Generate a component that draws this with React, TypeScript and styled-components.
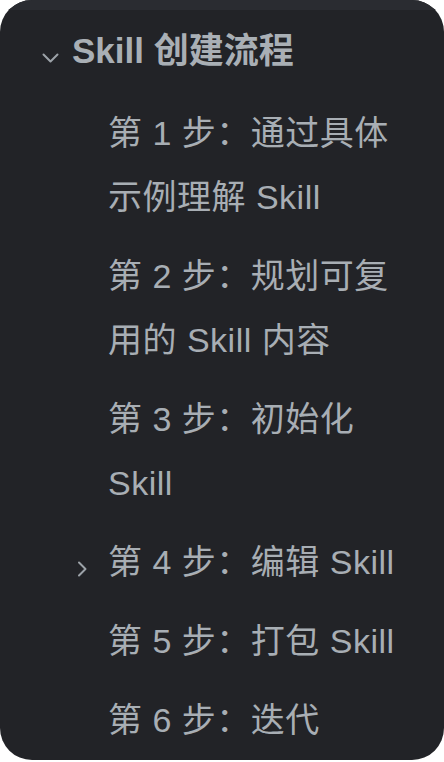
import styled, { createGlobalStyle } from "styled-components";

const GlobalStyle = createGlobalStyle`
    html, body {
        margin: 0;
        padding: 0;
        background: #ffffff;
    }

    body {
        font-family: "Liberation Sans", "Noto Sans CJK SC", sans-serif;
    }
`;

const Panel = styled.nav`
    width: 444px;
    height: 760px;
    box-sizing: border-box;
    background: #222327;
    border-radius: 32px;
    overflow: hidden;
    display: flex;
    flex-direction: column;
`;

const TopStrip = styled.div`
    height: 10px;
    flex-shrink: 0;
    background: #2a2c31;
`;

const Header = styled.div`
    display: flex;
    align-items: center;
    margin-top: 9px;
    padding-left: 42px;
    height: 64px;
`;

const IconSlot = styled.span<{ $width: number }>`
    width: ${(p) => p.$width}px;
    flex-shrink: 0;
    display: flex;
    align-items: center;
    align-self: flex-start;
    height: 64px;
    color: #9ca2a8;

    svg {
        margin-top: 14px;
        display: block;
    }
`;

const HeaderTitle = styled.span`
    font-size: 35px;
    font-weight: 700;
    line-height: 64px;
    color: #a9afb5;
    white-space: nowrap;
`;

const StepList = styled.ul`
    list-style: none;
    margin: 18px 0 0;
    padding: 0;
    display: flex;
    flex-direction: column;
    gap: 15px;
`;

const StepRow = styled.li`
    display: flex;
    padding-left: 77px;
    padding-right: 44px;
`;

const StepLabel = styled.span`
    flex: 1;
    font-size: 34px;
    line-height: 64px;
    letter-spacing: 0.5px;
    color: #a8aeb4;
`;

function ChevronDown() {
    return (
        <svg width="17" height="10" viewBox="0 0 17 10" fill="none">
            <path
                d="M1.5 1.5 L8.5 8.5 L15.5 1.5"
                stroke="currentColor"
                strokeWidth="2"
                strokeLinecap="round"
                strokeLinejoin="round"
            />
        </svg>
    );
}

function ChevronRight() {
    return (
        <svg width="11" height="16" viewBox="0 0 11 16" fill="none">
            <path
                d="M2 1.5 L8.5 8 L2 14.5"
                stroke="currentColor"
                strokeWidth="2"
                strokeLinecap="round"
                strokeLinejoin="round"
            />
        </svg>
    );
}

const steps = [
    { label: "第 1 步：通过具体示例理解 Skill" },
    { label: "第 2 步：规划可复用的 Skill 内容" },
    { label: "第 3 步：初始化 Skill" },
    { label: "第 4 步：编辑 Skill", collapsed: true },
    { label: "第 5 步：打包 Skill" },
    { label: "第 6 步：迭代" },
];

export default function App() {
    return (
        <>
            <GlobalStyle />
            <Panel>
                <TopStrip />
                <Header>
                    <IconSlot $width={30}>
                        <ChevronDown />
                    </IconSlot>
                    <HeaderTitle>Skill 创建流程</HeaderTitle>
                </Header>
                <StepList>
                    {steps.map((step) => (
                        <StepRow key={step.label}>
                            <IconSlot $width={31}>
                                {step.collapsed && <ChevronRight />}
                            </IconSlot>
                            <StepLabel>{step.label}</StepLabel>
                        </StepRow>
                    ))}
                </StepList>
            </Panel>
        </>
    );
}
